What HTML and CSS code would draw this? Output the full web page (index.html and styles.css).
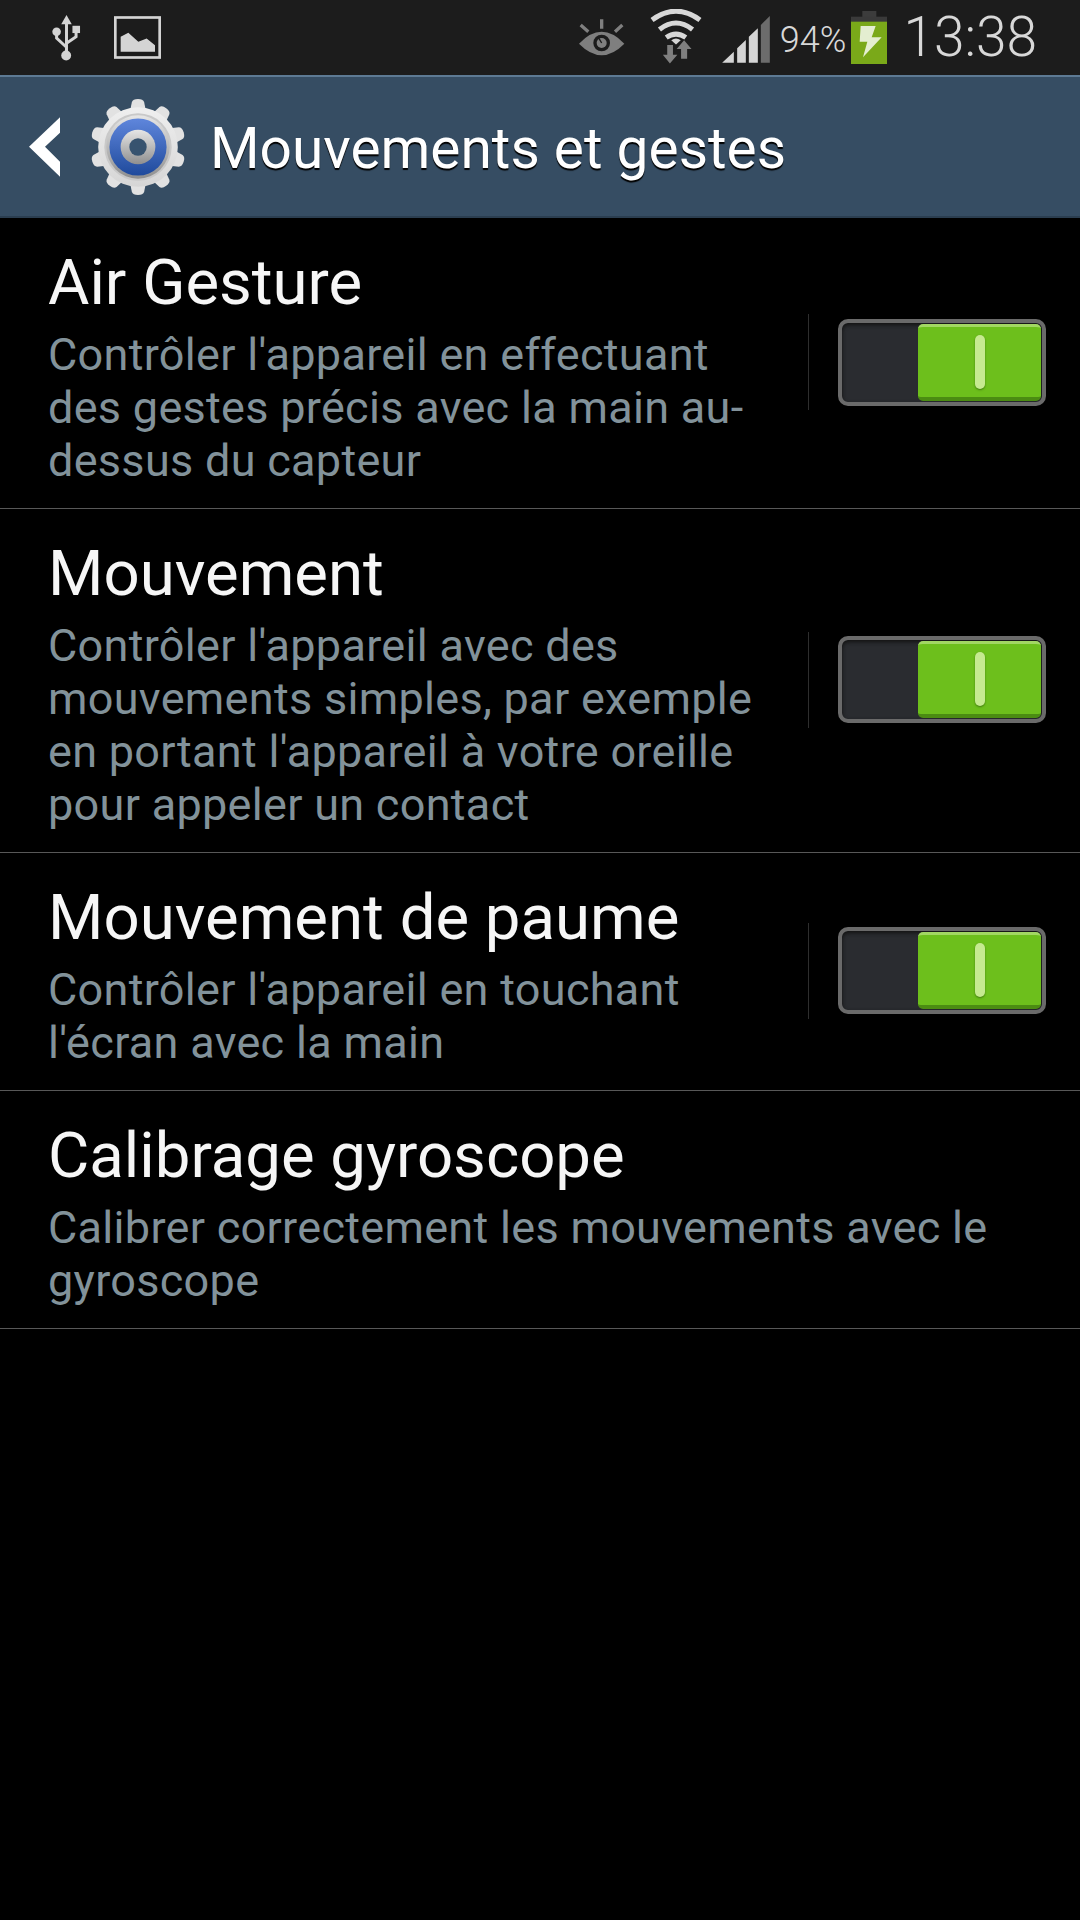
FILE: index.html
```html
<!DOCTYPE html>
<html>
    <head>
        <title>Mouvements et gestes</title>
        <link rel="stylesheet" href="styles.css">
    </head>
    <body>
        <div class="status-bar">
            <svg class="ic-usb" viewBox="150 40 100 144">
                <path class="fill-light" d="M200 42L216 70H184Z"/>
                <path class="line-light" d="M200 65V165M170 93V112L200 140M229 90V108L200 128"/>
                <circle class="fill-light" cx="170" cy="93" r="13"/>
                <circle class="fill-light" cx="199" cy="165" r="15"/>
                <rect class="fill-light" x="218" y="75" width="23" height="22"/>
            </svg>
            <svg class="ic-image" viewBox="342 48 141 128">
                <rect class="frame" x="346" y="52" width="133" height="120"/>
                <path class="fill-light" d="M362 155V110L385 98L415 125L440 115L465 135V155Z"/>
            </svg>
            <div class="spacer"></div>
            <svg class="ic-eye" viewBox="60 57 138 111">
                <path class="ray" d="M128 58V86M65 75L88 95M190 75L168 95"/>
                <path class="fill-gray" d="M60 131Q128 60 196 131Q128 200 60 131Z"/>
                <circle cx="128" cy="129" r="25" fill="#1c1c1c"/>
                <circle cx="128" cy="129" r="15" fill="#7f7f7f"/>
                <path d="M118 112L128 129" stroke="#1c1c1c" stroke-width="4"/>
            </svg>
            <svg class="ic-wifi" viewBox="268 28 160 162">
                <path class="arc" d="M277 60Q348 8 419 60"/>
                <path class="arc" d="M299 88Q348 50 397 88"/>
                <path class="arc" d="M319 112Q348 92 377 112"/>
                <path class="fill-light" d="M334 120Q348 110 362 120L348 133Z"/>
                <path class="fill-gray" d="M322 134H339V163H352L330 189L309 163H322Z"/>
                <path class="fill-gray" d="M372 120L394 146H381V175H363V146H350Z"/>
            </svg>
            <svg class="ic-signal" viewBox="487 48 143 141">
                <path class="fill-light" d="M487 188L522 155V188ZM532 188V145L558 120V188ZM567 188V110L594 85V188Z"/>
                <path fill="#6c6c6c" d="M603 188V75L630 48V188Z"/>
            </svg>
            <span class="battery-text">94%</span>
            <svg class="ic-battery" viewBox="876 33 108 159">
                <rect x="910" y="33" width="42" height="18" fill="#3c3c3c"/>
                <rect x="876" y="50" width="108" height="16" fill="#3a3a3a"/>
                <rect x="876" y="65" width="108" height="127" fill="#7aa919"/>
                <path fill="#e4eed0" d="M905 78H950L938 112H968L912 172L925 125H902Z"/>
            </svg>
            <span class="clock">13:38</span>
        </div>

        <div class="action-bar">
            <svg class="ic-back" viewBox="87 352 93 178">
                <path d="M180 352V398L135 440L180 485V530L87 440Z" fill="#fff"/>
            </svg>
            <svg class="ic-gear" viewBox="0 0 94 94">
                <defs>
                    <linearGradient id="gearBody" x1="0" y1="0" x2="0" y2="1">
                        <stop offset="0" stop-color="#efefef"/>
                        <stop offset="1" stop-color="#d6d6d6"/>
                    </linearGradient>
                    <linearGradient id="blue" x1="0" y1="0" x2="0" y2="1">
                        <stop offset="0" stop-color="#5f86dc"/>
                        <stop offset="1" stop-color="#1f4a9c"/>
                    </linearGradient>
                    <linearGradient id="silver" x1="0" y1="0" x2="0" y2="1">
                        <stop offset="0" stop-color="#e6e6e6"/>
                        <stop offset="1" stop-color="#8f8f8f"/>
                    </linearGradient>
                    <path id="tooth" d="M38 18L41 3Q42 0 47 0Q52 0 53 3L56 18Z" fill="#e2e2e2"/>
                </defs>
                <use href="#tooth"/>
                <use href="#tooth" transform="rotate(36 47 47)"/>
                <use href="#tooth" transform="rotate(72 47 47)"/>
                <use href="#tooth" transform="rotate(108 47 47)"/>
                <use href="#tooth" transform="rotate(144 47 47)"/>
                <use href="#tooth" transform="rotate(180 47 47)"/>
                <use href="#tooth" transform="rotate(216 47 47)"/>
                <use href="#tooth" transform="rotate(252 47 47)"/>
                <use href="#tooth" transform="rotate(288 47 47)"/>
                <use href="#tooth" transform="rotate(324 47 47)"/>
                <circle cx="47" cy="47" r="39" fill="url(#gearBody)"/>
                <circle cx="47" cy="47" r="33" fill="#c9c9c9"/>
                <circle cx="47" cy="47" r="31" fill="url(#silver)"/>
                <circle cx="47" cy="47" r="28" fill="url(#blue)"/>
                <circle cx="47" cy="47" r="17" fill="url(#silver)"/>
                <circle cx="47" cy="47" r="8.5" fill="#37536f"/>
            </svg>
            <h1 class="page-title">Mouvements et gestes</h1>
        </div>

        <ul class="settings">
            <li class="row">
                <div class="row-text">
                    <h2>Air Gesture</h2>
                    <p>Contrôler l'appareil en effectuant des gestes précis avec la main au-dessus du capteur</p>
                </div>
                <div class="divider"></div>
                <div class="toggle"><div class="thumb"><span class="grip"></span></div></div>
            </li>
            <li class="row">
                <div class="row-text">
                    <h2>Mouvement</h2>
                    <p>Contrôler l'appareil avec des mouvements simples, par exemple en portant l'appareil à votre oreille pour appeler un contact</p>
                </div>
                <div class="divider"></div>
                <div class="toggle"><div class="thumb"><span class="grip"></span></div></div>
            </li>
            <li class="row">
                <div class="row-text">
                    <h2>Mouvement de paume</h2>
                    <p>Contrôler l'appareil en touchant l'écran avec la main</p>
                </div>
                <div class="divider"></div>
                <div class="toggle"><div class="thumb"><span class="grip"></span></div></div>
            </li>
            <li class="row">
                <div class="row-text">
                    <h2>Calibrage gyroscope</h2>
                    <p>Calibrer correctement les mouvements avec le gyroscope</p>
                </div>
            </li>
        </ul>
    </body>
</html>
```

FILE: styles.css
```css
html, body {
    margin: 0;
    padding: 0;
    background: #000;
    font-family: Roboto, sans-serif;
}

body {
    min-height: 1920px;
}

.status-bar {
    display: flex;
    align-items: flex-start;
    height: 75px;
    background: #1c1c1c;
    color: #d8d8d8;
}

.spacer {
    flex: 1;
}

.status-bar svg {
    display: block;
    flex: none;
}

.fill-light { fill: #d4d4d4; }
.fill-gray { fill: #7f7f7f; }

.line-light {
    fill: none;
    stroke: #d4d4d4;
    stroke-width: 9;
}

.frame {
    fill: none;
    stroke: #d4d4d4;
    stroke-width: 8;
}

.ray {
    fill: none;
    stroke: #7f7f7f;
    stroke-width: 10;
}

.arc {
    fill: none;
    stroke: #d8d8d8;
    stroke-width: 15;
}

.ic-usb { width: 33px; height: 48px; margin: 14px 0 0 50px; }
.ic-image { width: 47px; height: 43px; margin: 16px 0 0 31px; }
.ic-eye { width: 46px; height: 37px; margin: 19px 0 0 0; }
.ic-wifi { width: 54px; height: 55px; margin: 9px 0 0 24px; }
.ic-signal { width: 48px; height: 47px; margin: 16px 0 0 19px; }
.ic-battery { width: 36px; height: 53px; margin: 11px 0 0 5px; }

.battery-text {
    margin: 20px 0 0 10px;
    font-size: 36px;
    line-height: 41px;
    font-weight: 300;
}

.clock {
    margin: 8px 43px 0 16px;
    font-size: 55px;
    line-height: 58px;
    font-weight: 300;
}

.action-bar {
    display: flex;
    align-items: center;
    box-sizing: border-box;
    height: 143px;
    background: #364d63;
    border-top: 2px solid #5d7a94;
    border-bottom: 2px solid #2b3e50;
}

.ic-back {
    width: 31px;
    height: 60px;
    margin-left: 29px;
}

.ic-gear {
    width: 96px;
    height: 96px;
    margin-left: 30px;
}

.page-title {
    margin: 4px 0 0 24px;
    font-size: 56.8px;
    font-weight: 400;
    color: #fff;
    text-shadow: 0 2px 1px #000;
}

.settings {
    list-style: none;
    margin: 0;
    padding: 0;
}

.row {
    display: flex;
    align-items: center;
    padding: 0 34px 0 48px;
    border-bottom: 1px solid #585858;
}

.row-text {
    flex: 1;
    min-width: 0;
    padding: 22px 0 20px;
}

.row-text h2 {
    margin: 0;
    font-size: 63.5px;
    line-height: 85px;
    font-weight: 400;
    color: #f6f6f6;
}

.row-text p {
    margin: 3px 0 1px;
    font-size: 45px;
    letter-spacing: .3px;
    line-height: 53px;
    color: #82929a;
}

.divider {
    flex: none;
    width: 1px;
    height: 96px;
    margin: 0 29px 2px 31px;
    background: #2e2e2e;
}

.toggle {
    flex: none;
    display: flex;
    justify-content: flex-end;
    box-sizing: border-box;
    width: 208px;
    height: 87px;
    margin-bottom: 2px;
    padding: 1px;
    border: 4px solid #6a6a6a;
    border-radius: 10px;
    background: #2a2c30;
    box-shadow: inset 0 2px 4px #111;
}

.thumb {
    display: flex;
    align-items: center;
    justify-content: center;
    box-sizing: border-box;
    width: 123px;
    height: 77px;
    border-top: 3px solid #a2d763;
    border-bottom: 4px solid #4b8c12;
    border-radius: 5px;
    background: #6dbf1c;
}

.grip {
    width: 10px;
    height: 54px;
    border-radius: 5px;
    background: #c6ea90;
    box-shadow: 0 1px 2px #3f7a0c;
}
```
